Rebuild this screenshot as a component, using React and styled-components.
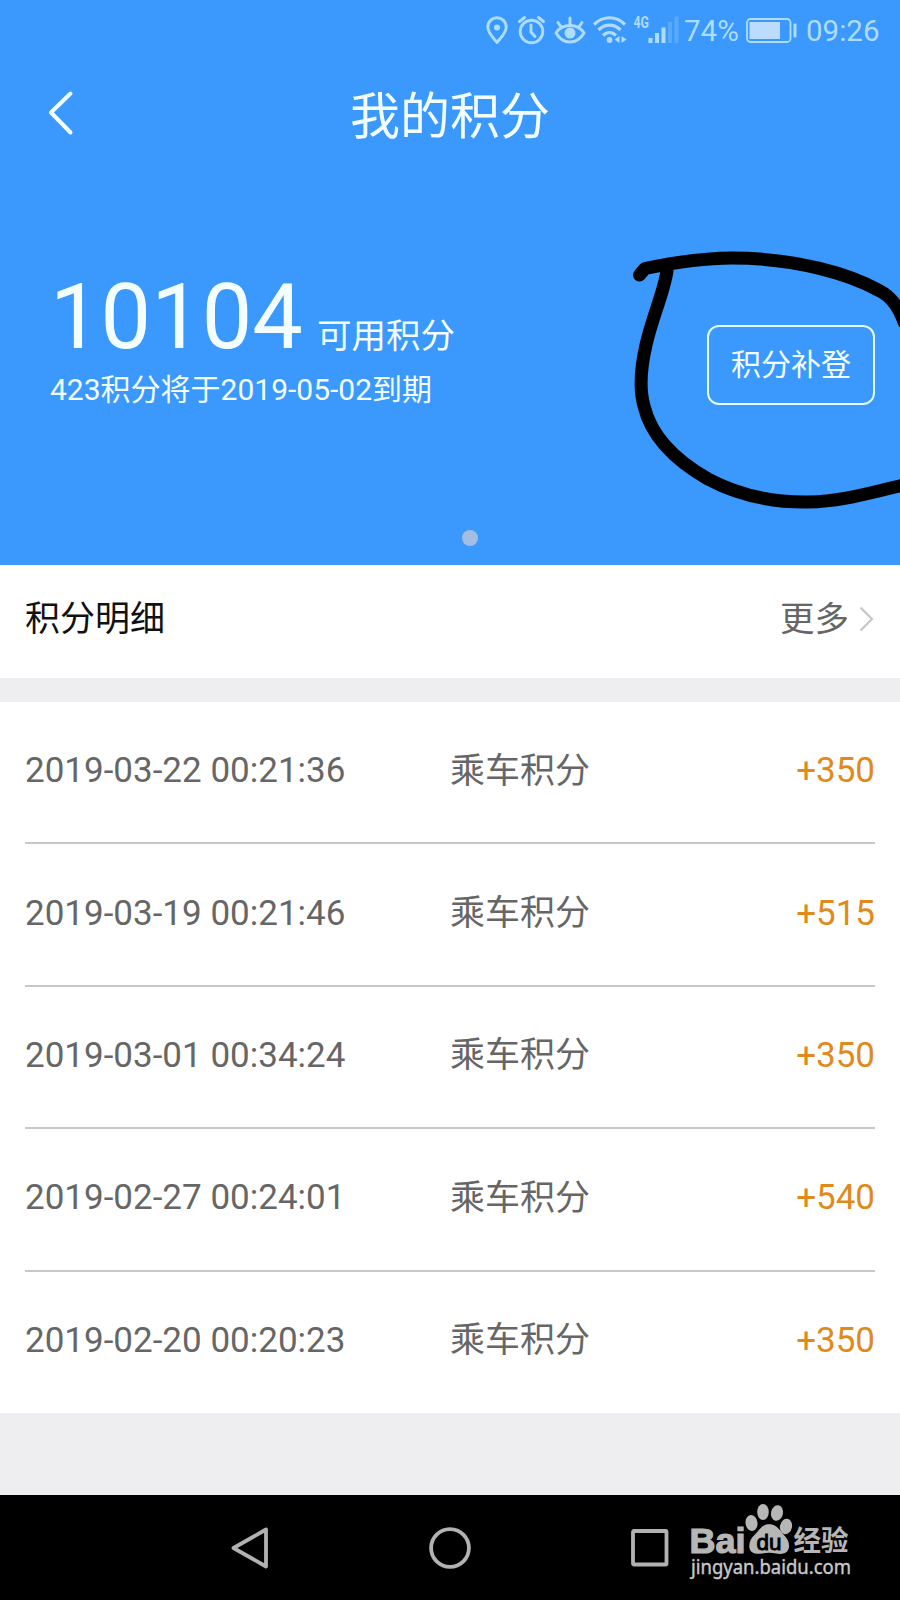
import React from 'react';
import styled, { createGlobalStyle } from 'styled-components';

const GlobalStyle = createGlobalStyle`
  * { box-sizing: border-box; }
  body {
    margin: 0;
    background: #eeeef0;
    font-family: Roboto, "Noto Sans CJK SC", sans-serif;
  }
`;

const Screen = styled.div`
  position: relative;
  display: flex;
  flex-direction: column;
  width: 900px;
  height: 1600px;
  overflow: hidden;
  background: #eeeef0;
`;

const Hero = styled.header`
  display: flex;
  flex-direction: column;
  height: 565px;
  background: #3b98fc;
  color: #f3ffff;
`;

const StatusBar = styled.div`
  display: flex;
  align-items: center;
  justify-content: flex-end;
  height: 60px;
  padding-right: 20px;
  color: #aedcfd;
  font-size: 29.5px;
  line-height: 60px;
`;

const StatusIcon = styled.svg`
  display: block;
  flex: none;
  width: ${(p) => p.$w}px;
  height: 30px;
  margin-right: ${(p) => p.$gap}px;
  overflow: visible;
`;

const StatusText = styled.span`
  display: block;
  width: ${(p) => p.$w}px;
  margin-right: ${(p) => p.$gap || 0}px;
  padding-top: 2px;
  white-space: nowrap;
`;

const TitleBar = styled.div`
  display: grid;
  grid-template-columns: 100px 1fr 100px;
  align-items: center;
  height: 108px;
`;

const BackButton = styled.button`
  display: flex;
  padding: 0 0 2px 45px;
  border: 0;
  background: none;
  color: inherit;
`;

const Title = styled.h1`
  margin: 0;
  padding-top: 5px;
  font-size: 50px;
  font-weight: 400;
  line-height: 60px;
  text-align: center;
`;

const Summary = styled.div`
  display: flex;
  align-items: flex-start;
  justify-content: space-between;
  height: 361px;
  padding: 97px 25px 0 50px;
`;

const BalanceLine = styled.div`
  display: flex;
  align-items: baseline;
  height: 104px;
  line-height: 105px;
`;

const Balance = styled.span`
  font-size: 90px;
`;

const BalanceUnit = styled.span`
  margin-left: 14px;
  font-size: 34.5px;
`;

const Expiry = styled.p`
  margin: 0;
  font-size: 30px;
  line-height: 42px;
  white-space: nowrap;
`;

const ClaimButton = styled.button`
  width: 168px;
  height: 80px;
  margin-top: 60px;
  padding: 0 0 6px;
  border: 2px solid #e2ffff;
  border-radius: 12px;
  background: none;
  color: inherit;
  font: inherit;
  font-size: 30px;
`;

const Pager = styled.div`
  display: flex;
  justify-content: center;
  padding-left: 40px;
`;

const Dot = styled.i`
  width: 16px;
  height: 16px;
  margin-top: 1px;
  border-radius: 50%;
  background: #a4bee3;
`;

const SectionHead = styled.section`
  display: flex;
  align-items: center;
  justify-content: space-between;
  height: 112.5px;
  padding: 0 26px 11px 25px;
  background: #fff;
`;

const SectionTitle = styled.h2`
  margin: 0;
  color: #111;
  font-size: 35px;
  font-weight: 400;
`;

const MoreLink = styled.a`
  display: flex;
  align-items: center;
  gap: 10px;
  color: #666;
  font-size: 34.5px;
`;

const MoreChevron = styled.svg`
  margin-top: 7px;
`;

const Records = styled.ul`
  margin: 24.5px 0 0;
  padding: 0 25px;
  height: 711px;
  list-style: none;
  background: #fff;
`;

const Record = styled.li`
  display: grid;
  grid-template-columns: 425px 1fr auto;
  align-items: center;
  height: 142.4px;
  padding-bottom: 2px;
  border-bottom: 2px solid ${(p) => (p.$last ? 'transparent' : '#c8c8c8')};
  color: #666;
  font-size: 35px;
  line-height: 50px;
  white-space: nowrap;
`;

const RecordKind = styled.span`
  padding-top: 1px;
`;

const Amount = styled.span`
  color: #e08a1c;
`;

const NavBar = styled.nav`
  display: flex;
  align-items: center;
  justify-content: space-between;
  height: 105px;
  margin-top: auto;
  padding: 0 229px 0 229px;
  background: #000;
`;

const NavIcon = styled.svg`
  width: 42px;
  height: 42px;
  fill: none;
  stroke: #b2b2b2;
  stroke-width: 3.8;
  stroke-linejoin: round;
`;

const Doodle = styled.svg`
  position: absolute;
  top: 240px;
  right: 0;
  width: 280px;
  height: 280px;
  pointer-events: none;
`;

const Watermark = styled.svg`
  position: absolute;
  right: 40px;
  bottom: 10px;
  width: 175px;
  height: 90px;
  overflow: visible;
  pointer-events: none;
`;

const records = [
  ['2019-03-22 00:21:36', '+350'],
  ['2019-03-19 00:21:46', '+515'],
  ['2019-03-01 00:34:24', '+350'],
  ['2019-02-27 00:24:01', '+540'],
  ['2019-02-20 00:20:23', '+350'],
];

const line = { fill: 'none', stroke: 'currentColor', strokeWidth: 2.9, strokeLinecap: 'round', strokeLinejoin: 'round' };

function StatusIcons() {
  return (
    <>
      <StatusIcon $w={22} $gap={10} viewBox="0 0 22 30">
        <path {...line} d="M10 27.500C7 23.500 .800 18 .800 12.200C.800 6.600 5 2.800 10 2.800s9.200 3.800 9.200 9.400C19.200 18 13 23.500 10 27.500Z" />
        <circle cx="10" cy="12.500" r="3" fill="currentColor" />
      </StatusIcon>
      <StatusIcon $w={27} $gap={10} viewBox="0 0 27 30">
        <circle {...line} cx="12.500" cy="16.500" r="11.300" />
        <path {...line} d="M12 10v7l4 4.500M.500 6.500L5.500 2.500M19.500 2.500l5 4" />
      </StatusIcon>
      <StatusIcon $w={30} $gap={8} viewBox="0 0 30 30">
        <path {...line} strokeWidth="3" d="M0 18C3.500 12.500 8.500 10.500 14 10.500s10.500 2 14 7.500C24.500 24 19.500 27 14 27S3.500 24 0 18ZM14 3v7M2 7.500L5.500 12.500M26 7.500L22.500 12.500" />
        <circle cx="14" cy="18" r="5.500" fill="currentColor" />
      </StatusIcon>
      <StatusIcon $w={33} $gap={7} viewBox="0 0 33 30">
        <path {...line} strokeWidth="3.200" strokeLinecap="butt" d="M0 9.500C9 .500 22 .500 31 9.500M4.500 15C11 8.500 20 8.500 26.500 15M9 20.500c4-4 9-4 13 0" />
        <circle cx="15.500" cy="25" r="2.900" fill="currentColor" />
        <path fill="currentColor" d="M25.500 21v7l-5-3.500ZM27.500 21v7l5-3.500Z" />
      </StatusIcon>
      <StatusIcon $w={45} $gap={5} viewBox="0 0 45 30">
        <text x="-.500" y="12.500" fill="currentColor" fontSize="16.500" fontWeight="700" textLength="15.500" lengthAdjust="spacingAndGlyphs">4G</text>
        <path fill="currentColor" d="M14.500 23h4v5h-4ZM21 18h4v10h-4ZM27.500 12.500h4V28h-4Z" />
        <path fill="currentColor" opacity=".28" d="M34 7h4v21h-4ZM40.500 1.500h4V28h-4Z" />
      </StatusIcon>
    </>
  );
}

function Battery() {
  return (
    <StatusIcon $w={51} $gap={9} viewBox="0 0 51 30">
      <rect x="1" y="4" width="43.500" height="23" rx="3.500" fill="none" stroke="currentColor" strokeWidth="1.800" />
      <rect x="3.500" y="7" width="30.500" height="17" fill="#bcdcff" />
      <rect x="47.500" y="8.500" width="3" height="14" rx="1" fill="currentColor" />
    </StatusIcon>
  );
}

export default function App() {
  return (
    <Screen>
      <GlobalStyle />
      <Hero>
        <StatusBar>
          <StatusIcons />
          <StatusText $w={54} $gap={8}>74%</StatusText>
          <Battery />
          <StatusText $w={74}>09:26</StatusText>
        </StatusBar>
        <TitleBar>
          <BackButton aria-label="返回">
            <svg width="30" height="46" viewBox="0 0 30 46" fill="none" stroke="currentColor" strokeWidth="4" strokeLinecap="round" strokeLinejoin="round">
              <path d="M25.500 3.500L6 22.500L25.500 42.500" />
            </svg>
          </BackButton>
          <Title>我的积分</Title>
        </TitleBar>
        <Summary>
          <div>
            <BalanceLine>
              <Balance>10104</Balance>
              <BalanceUnit>可用积分</BalanceUnit>
            </BalanceLine>
            <Expiry>423积分将于2019-05-02到期</Expiry>
          </div>
          <ClaimButton>积分补登</ClaimButton>
        </Summary>
        <Pager><Dot /></Pager>
      </Hero>

      <SectionHead>
        <SectionTitle>积分明细</SectionTitle>
        <MoreLink>
          更多
          <MoreChevron width="15" height="26" viewBox="0 0 15 26" fill="none" stroke="#c6c6c6" strokeWidth="2.200">
            <path d="M1.500 1.500L13 13L1.500 24.500" />
          </MoreChevron>
        </MoreLink>
      </SectionHead>

      <Records>
        {records.map(([time, amount], i) => (
          <Record key={time} $last={i === records.length - 1}>
            <span>{time}</span>
            <RecordKind>乘车积分</RecordKind>
            <Amount>{amount}</Amount>
          </Record>
        ))}
      </Records>

      <NavBar>
        <NavIcon viewBox="0 0 42 42"><path d="M4.500 21L37 2.500V39.500Z" /></NavIcon>
        <NavIcon viewBox="0 0 42 42"><circle cx="21" cy="21" r="18.900" /></NavIcon>
        <NavIcon viewBox="0 0 42 42"><rect x="4" y="4" width="33.500" height="33.500" rx="1" /></NavIcon>
      </NavBar>

      <Doodle viewBox="620 240 280 280" fill="none" stroke="#000" strokeWidth="13" strokeLinecap="round" strokeLinejoin="round">
        <path d="M639.500 275L645 268.500C672 263 700 258 732 258C795 258 850 274 880 291C892 297 899 308 904 322" />
        <path d="M667 271C664 292 652 318 646 345C640 371 640 392 644 406C652 440 680 463 708 479C738 495 773 502.500 808 502C843 501.500 872 492 904 485" />
      </Doodle>

      <Watermark viewBox="685 1500 175 90" fill="#b6b6b6">
        <text x="689.500" y="1552.500" stroke="#b6b6b6" strokeWidth="1.200" fontFamily="Liberation Sans, sans-serif" fontWeight="700" fontSize="35" textLength="56" lengthAdjust="spacingAndGlyphs">Bai</text>
        <ellipse cx="751.500" cy="1523" rx="6" ry="8" transform="rotate(-8 751.500 1523)" />
        <ellipse cx="763" cy="1512" rx="5.800" ry="8" />
        <ellipse cx="777" cy="1513" rx="6" ry="7.800" transform="rotate(12 777 1513)" />
        <ellipse cx="786" cy="1526.500" rx="6" ry="7.800" transform="rotate(12 786 1526.500)" />
        <path d="M769 1524.300C776 1524.300 779 1529 783 1534C787 1538 789.500 1542 789 1547C788 1554 782 1554.500 776 1553.500C771 1552.500 767 1552.500 762 1553.500C756 1554.500 750 1553.500 749.300 1547C749 1542 751 1538 755 1534.500C760 1529 762 1524.300 769 1524.300Z" />
        <text x="756.500" y="1549.500" fill="#000" stroke="#000" strokeWidth=".9" fontFamily="Liberation Sans, sans-serif" fontSize="22" textLength="25" lengthAdjust="spacingAndGlyphs">du</text>
        <text x="793.500" y="1550.500" fontFamily="Noto Sans CJK SC, sans-serif" fontWeight="700" fontSize="28" textLength="55" lengthAdjust="spacingAndGlyphs">经验</text>
        <text x="691" y="1574" fill="#c8c8c8" stroke="#c8c8c8" strokeWidth=".4" fontFamily="Noto Sans, sans-serif" fontSize="19" textLength="160" lengthAdjust="spacingAndGlyphs">jingyan.baidu.com</text>
      </Watermark>
    </Screen>
  );
}
